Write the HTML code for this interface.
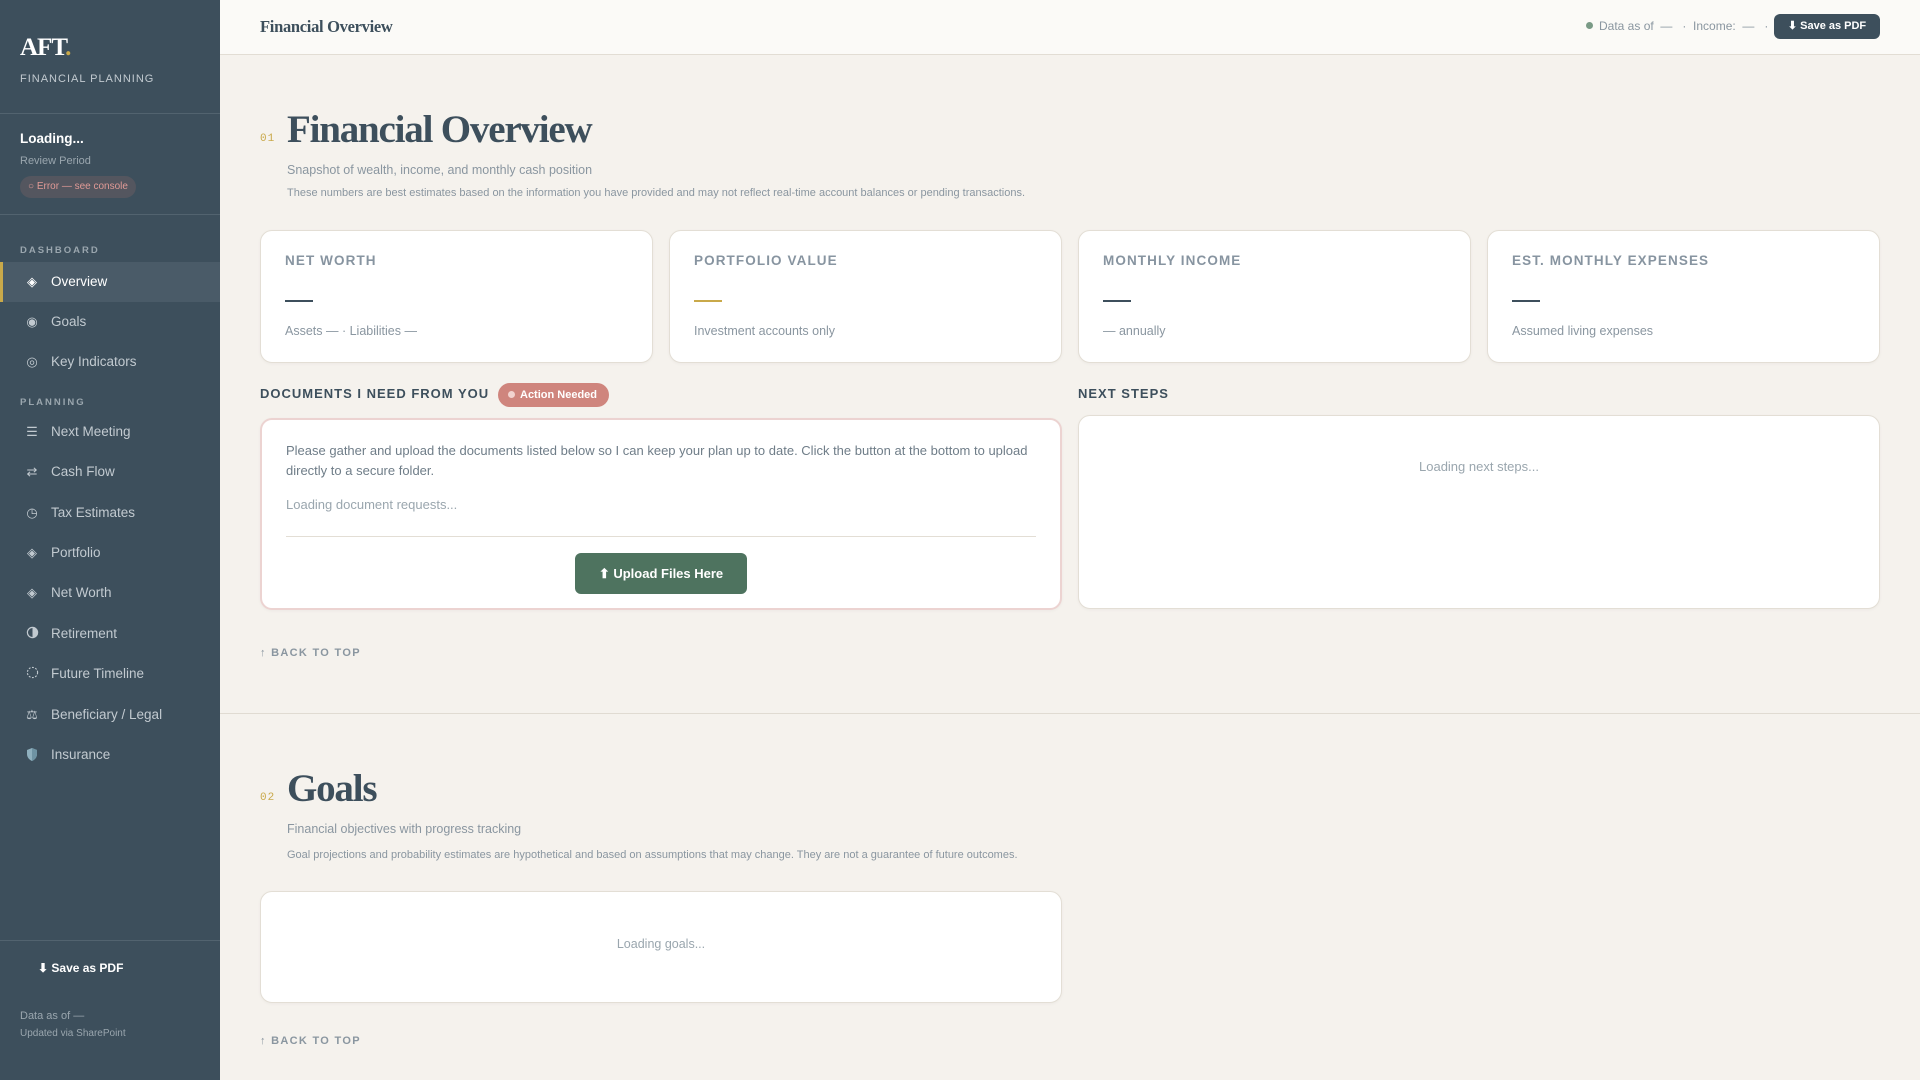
<!DOCTYPE html>
<html><head><meta charset="utf-8"><style>
*{box-sizing:border-box;margin:0;padding:0}
body{width:1920px;height:1080px;overflow:hidden;background:#f5f2ed;font-family:"Liberation Sans",sans-serif;position:relative}
.sb{position:absolute;left:0;top:0;width:220px;height:1080px;background:#3d4f5c;color:#fff}
.abs{position:absolute;white-space:nowrap}
.logo{left:20px;top:34px;font-family:"Liberation Serif",serif;font-weight:bold;font-size:25px;letter-spacing:-1px}
.logo span{color:#c9a94a}
.hr{position:absolute;left:0;width:220px;height:1px;background:#52636f}
.nav{position:absolute;left:0;width:220px;height:40px;color:#c2cad0;font-size:13.5px}
.nav .i{position:absolute;left:25px;top:12px;width:14px;text-align:center;font-size:13px;color:#c2cad0}
.nav .t{position:absolute;left:51px;top:12px}
.nav.act{background:#4a5b68;color:#fff}
.nav.act:before{content:"";position:absolute;left:0;top:0;width:3px;height:40px;background:#c9a94a}
.sec{left:20px;font-size:9.5px;font-weight:bold;letter-spacing:2px;color:#9aa6ae}
.top{position:absolute;left:220px;top:0;width:1700px;height:55px;background:#fbfaf7;border-bottom:1px solid #e2ddd4}
.card{position:absolute;background:#fff;border:1px solid #e3ded5;border-radius:12px;box-shadow:0 1px 3px rgba(0,0,0,.04)}
.lbl{position:absolute;left:24px;top:22px;font-size:13.5px;font-weight:bold;letter-spacing:1.1px;color:#8794a0}
.dash{position:absolute;left:24px;top:69px;width:28px;height:2px;background:#3d4f5c}
.sub{position:absolute;left:24px;top:93px;font-size:12.5px;color:#8a96a0}
.serif{font-family:"Liberation Serif",serif;color:#3d4f5c}
.ttl{font-weight:bold;letter-spacing:-1.2px}
.num{font-family:"Liberation Mono",monospace;font-size:11px;color:#c9a94a;letter-spacing:1px}
.btt{font-size:11px;font-weight:bold;letter-spacing:1.3px;color:#8a96a0}
.h3{font-size:13px;font-weight:bold;letter-spacing:1px;color:#3d4f5c}
</style></head><body>
<div class="sb">
<div class="abs logo">AFT<span>.</span></div>
<div class="abs" style="left:20px;top:73px;font-size:11px;letter-spacing:1px;color:#c2cad0">FINANCIAL PLANNING</div>
<div class="hr" style="top:113px"></div>
<div class="abs" style="left:20px;top:131px;font-size:13.5px;font-weight:bold">Loading...</div>
<div class="abs" style="left:20px;top:155px;font-size:11px;color:#9aa6ae">Review Period</div>
<div class="abs" style="left:20px;top:176px;width:116px;height:22px;border-radius:11px;background:#54565f;color:#e09a96;font-size:10px;line-height:22px;padding-left:8px">○ Error — see console</div>
<div class="hr" style="top:214px"></div>
<div class="abs sec" style="top:245px">DASHBOARD</div>
<div class="nav act" style="top:262px"><span class="i" style="color:#fff">◈</span><span class="t">Overview</span></div>
<div class="nav" style="top:302px"><span class="i">◉</span><span class="t">Goals</span></div>
<div class="nav" style="top:342px"><span class="i">◎</span><span class="t">Key Indicators</span></div>
<div class="abs sec" style="top:397px">PLANNING</div>
<div class="nav" style="top:412px"><span class="i">☰</span><span class="t">Next Meeting</span></div>
<div class="nav" style="top:452px"><span class="i">⇄</span><span class="t">Cash Flow</span></div>
<div class="nav" style="top:493px"><span class="i">◷</span><span class="t">Tax Estimates</span></div>
<div class="nav" style="top:533px"><span class="i">◈</span><span class="t">Portfolio</span></div>
<div class="nav" style="top:573px"><span class="i">◈</span><span class="t">Net Worth</span></div>
<div class="nav" style="top:614px"><span class="i"><svg width="13" height="13" viewBox="0 0 14 14"><circle cx="7" cy="7" r="5.5" fill="none" stroke="#c2cad0" stroke-width="1.3"/><path d="M7 1.5a5.5 5.5 0 0 1 0 11z" fill="#c2cad0"/></svg></span><span class="t">Retirement</span></div>
<div class="nav" style="top:654px"><span class="i"><svg width="13" height="13" viewBox="0 0 14 14"><circle cx="7" cy="7" r="5.5" fill="none" stroke="#c2cad0" stroke-width="1.2" stroke-dasharray="2 1.6"/></svg></span><span class="t">Future Timeline</span></div>
<div class="nav" style="top:695px"><span class="i">⚖</span><span class="t">Beneficiary / Legal</span></div>
<div class="nav" style="top:735px"><span class="i"><svg width="14" height="15" viewBox="0 0 14 15"><path d="M7 1L2 3v4c0 3.5 2.3 5.8 5 7 2.7-1.2 5-3.5 5-7V3z" fill="#8fb0be"/><path d="M7 1v13c2.7-1.2 5-3.5 5-7V3z" fill="#6f93a3"/></svg></span><span class="t">Insurance</span></div>
<div class="hr" style="top:940px"></div>
<div class="abs" style="left:38px;top:961px;font-size:12px;font-weight:bold">⬇ Save as PDF</div>
<div class="abs" style="left:20px;top:1010px;font-size:11px;color:#9aa6ae">Data as of —</div>
<div class="abs" style="left:20px;top:1028px;font-size:10px;color:#9aa6ae">Updated via SharePoint</div>
</div>

<div class="top">
<div class="abs serif" style="left:40px;top:17px;font-size:16.5px;font-weight:bold;letter-spacing:-0.3px">Financial Overview</div>
<div class="abs" style="left:1366px;top:22px;width:7px;height:7px;border-radius:50%;background:#7a9a86"></div>
<div class="abs" style="left:1379px;top:19px;font-size:12px;color:#8a96a0">Data as of &nbsp;— &nbsp; · &nbsp;Income: &nbsp;— &nbsp; ·</div>
<div class="abs" style="left:1554px;top:14px;width:106px;height:25px;border-radius:6px;background:#3d4f5c;color:#fff;font-size:11px;font-weight:bold;text-align:center;line-height:25px">⬇ Save as PDF</div>
</div>

<div class="abs num" style="left:260px;top:133px">01</div>
<div class="abs serif ttl" style="left:287px;top:107px;font-size:39px">Financial Overview</div>
<div class="abs" style="left:287px;top:163px;font-size:12.5px;color:#8a96a0">Snapshot of wealth, income, and monthly cash position</div>
<div class="abs" style="left:287px;top:187px;font-size:11px;color:#8a96a0">These numbers are best estimates based on the information you have provided and may not reflect real-time account balances or pending transactions.</div>

<div class="card" style="left:260px;top:230px;width:393px;height:133px"><div class="lbl">NET WORTH</div><div class="dash"></div><div class="sub">Assets — · Liabilities —</div></div>
<div class="card" style="left:669px;top:230px;width:393px;height:133px"><div class="lbl">PORTFOLIO VALUE</div><div class="dash" style="background:#c9a94a"></div><div class="sub">Investment accounts only</div></div>
<div class="card" style="left:1078px;top:230px;width:393px;height:133px"><div class="lbl">MONTHLY INCOME</div><div class="dash"></div><div class="sub">— annually</div></div>
<div class="card" style="left:1487px;top:230px;width:393px;height:133px"><div class="lbl">EST. MONTHLY EXPENSES</div><div class="dash"></div><div class="sub">Assumed living expenses</div></div>

<div class="abs h3" style="left:260px;top:386px">DOCUMENTS I NEED FROM YOU</div>
<div class="abs" style="left:498px;top:383px;width:111px;height:24px;border-radius:12px;background:#cf857d;color:#fff;font-size:11px;font-weight:bold;line-height:24px;padding-left:10px"><span style="display:inline-block;width:7px;height:7px;border-radius:50%;background:#f2d3cf;margin-right:5px"></span>Action Needed</div>
<div class="card" style="left:260px;top:418px;width:802px;height:192px;border:2px solid #ecd3d1">
<div class="abs" style="left:24px;top:21px;width:760px;white-space:normal;font-size:13px;line-height:20px;color:#6f7d88">Please gather and upload the documents listed below so I can keep your plan up to date. Click the button at the bottom to upload directly to a secure folder.</div>
<div class="abs" style="left:24px;top:77px;font-size:13px;color:#9aa6ae">Loading document requests...</div>
<div class="abs" style="left:24px;top:116px;width:750px;height:1px;background:#e3ded5"></div>
<div class="abs" style="left:313px;top:133px;width:172px;height:41px;border-radius:6px;background:#4e735f;color:#fff;font-size:13px;font-weight:bold;text-align:center;line-height:41px">⬆ Upload Files Here</div>
</div>

<div class="abs h3" style="left:1078px;top:386px">NEXT STEPS</div>
<div class="card" style="left:1078px;top:415px;width:802px;height:194px"><div class="abs" style="left:0;width:800px;text-align:center;top:43px;font-size:13px;color:#9aa6ae">Loading next steps...</div></div>

<div class="abs btt" style="left:260px;top:647px">↑ BACK TO TOP</div>
<div class="abs" style="left:220px;top:713px;width:1700px;height:1px;background:#e0dbd2"></div>

<div class="abs num" style="left:260px;top:792px">02</div>
<div class="abs serif ttl" style="left:287px;top:766px;font-size:39px">Goals</div>
<div class="abs" style="left:287px;top:822px;font-size:12.5px;color:#8a96a0">Financial objectives with progress tracking</div>
<div class="abs" style="left:287px;top:849px;font-size:11px;color:#8a96a0">Goal projections and probability estimates are hypothetical and based on assumptions that may change. They are not a guarantee of future outcomes.</div>
<div class="card" style="left:260px;top:891px;width:802px;height:112px"><div class="abs" style="left:0;width:800px;text-align:center;top:45px;font-size:12.5px;color:#9aa6ae">Loading goals...</div></div>
<div class="abs btt" style="left:260px;top:1035px">↑ BACK TO TOP</div>
</body></html>
